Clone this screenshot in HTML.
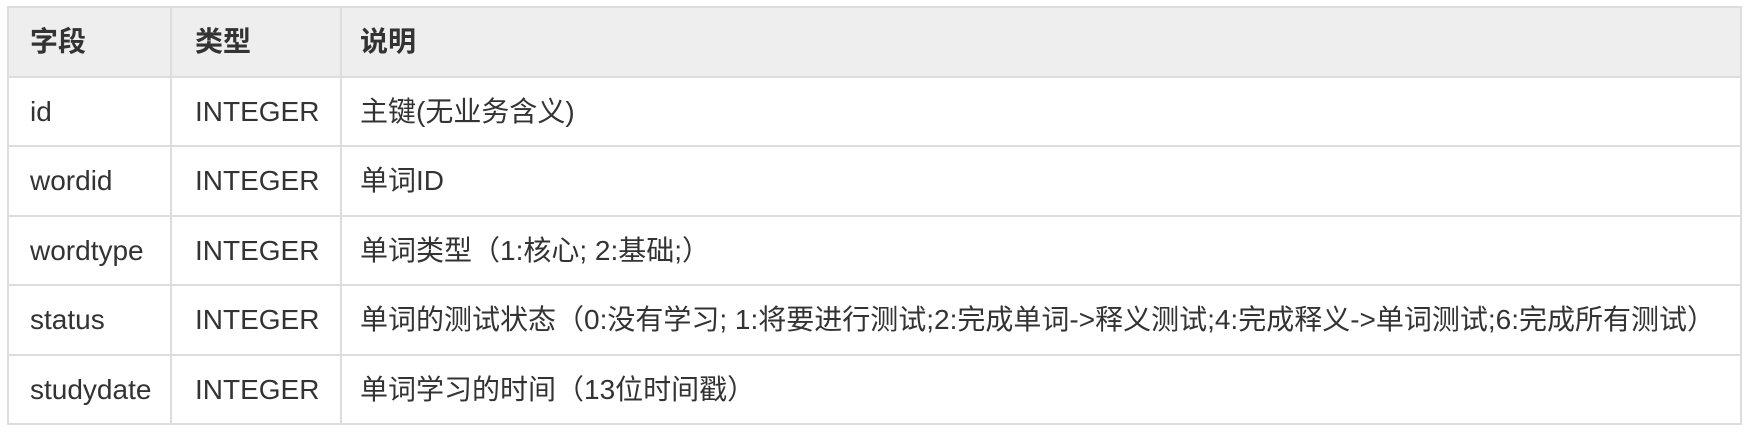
<!DOCTYPE html>
<html><head><meta charset="utf-8"><style>
html,body{margin:0;padding:0;background:#fff;width:1746px;height:436px;overflow:hidden}
table{position:absolute;left:7px;top:6px;width:1735px;table-layout:fixed;border-collapse:collapse;font-family:"Liberation Sans","Noto Sans CJK SC",sans-serif;font-size:28px;color:#333}
td,th{border:2px solid #ddd;height:67.5px;line-height:67px;padding:0 0 0 21px;text-align:left;vertical-align:middle;white-space:nowrap;overflow:visible}
td:nth-child(2),th:nth-child(2){padding-left:23px}
td:nth-child(3),th:nth-child(3){padding-left:18px}
th{background:#eee;font-weight:bold}
</style></head><body>
<table>
<colgroup><col style="width:163px"><col style="width:170px"><col></colgroup>
<tr><th>字段</th><th>类型</th><th>说明</th></tr>
<tr><td>id</td><td>INTEGER</td><td>主键(无业务含义)</td></tr>
<tr><td>wordid</td><td>INTEGER</td><td>单词ID</td></tr>
<tr><td>wordtype</td><td>INTEGER</td><td>单词类型（1:核心; 2:基础;）</td></tr>
<tr><td>status</td><td>INTEGER</td><td>单词的测试状态（0:没有学习; 1:将要进行测试;2:完成单词-&gt;释义测试;4:完成释义-&gt;单词测试;6:完成所有测试）</td></tr>
<tr><td>studydate</td><td>INTEGER</td><td>单词学习的时间（13位时间戳）</td></tr>
</table>
</body></html>
